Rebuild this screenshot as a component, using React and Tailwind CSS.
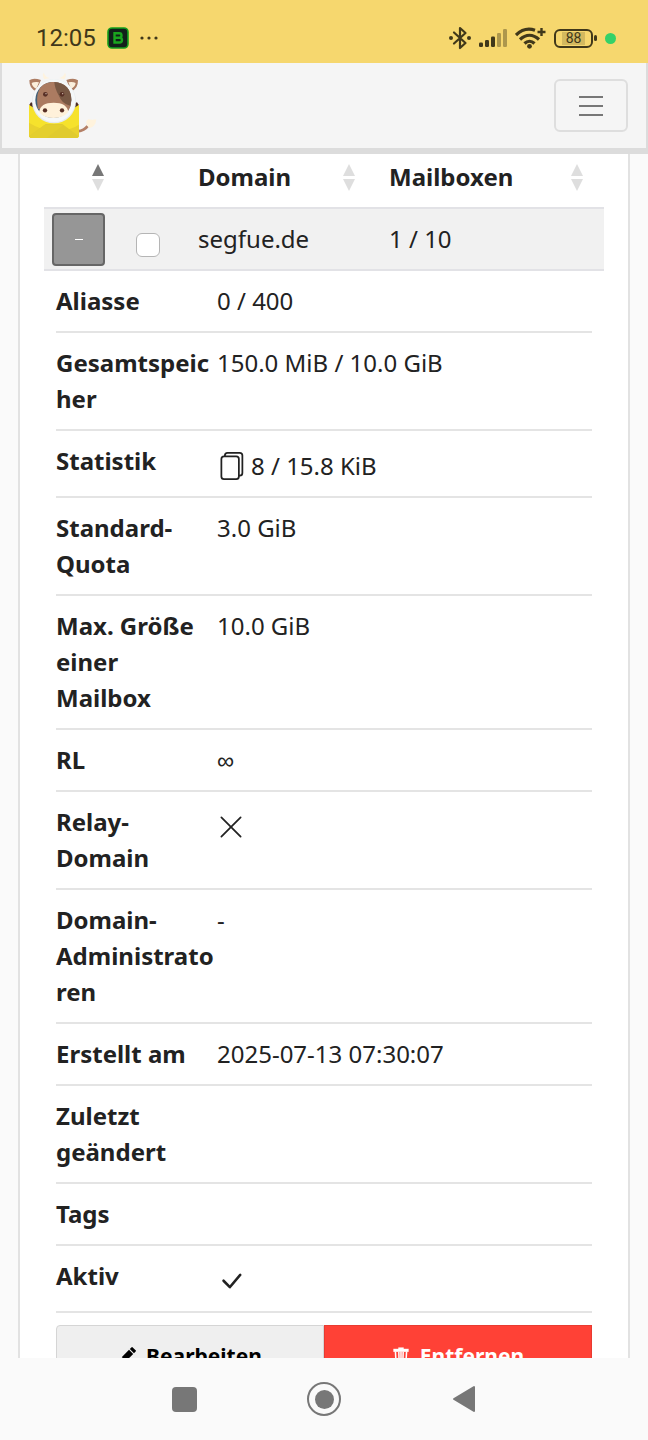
import { BsCheckLg, BsFiles, BsPencilFill, BsXLg } from 'react-icons/bs';

const details = [
  { label: 'Aliasse', value: '0 / 400' },
  { label: 'Gesamtspeicher', value: '150.0 MiB / 10.0 GiB' },
  { label: 'Statistik', value: '8 / 15.8 KiB', icon: BsFiles },
  { label: 'Standard-Quota', value: '3.0 GiB' },
  { label: 'Max. Größe einer Mailbox', value: '10.0 GiB' },
  { label: 'RL', value: '∞' },
  { label: 'Relay-Domain', icon: BsXLg },
  { label: 'Domain-Administratoren', value: '-' },
  { label: 'Erstellt am', value: '2025-07-13 07:30:07' },
  { label: 'Zuletzt geändert' },
  { label: 'Tags' },
  { label: 'Aktiv', icon: BsCheckLg },
];

function StatusBar() {
  return (
    <div className="flex h-[63px] shrink-0 items-center justify-between bg-[#f6d76e] pt-[13px] pr-8 pl-9 text-[#40381a]">
      <div className="flex items-center gap-[10px]">
        <span className="font-['Roboto',sans-serif] text-2xl leading-6">12:05</span>
        <svg className="size-6" viewBox="0 0 24 24">
          <rect x="2" y="2" width="20" height="20" rx="4" fill="#12201a" stroke="#14a01c" strokeWidth="1.6" />
          <path d="M8.500 7.200h4.800q2.200 0 2.200 2.200t-2.200 2.300H8.500zM8.500 11.700h5q2.500 0 2.500 2.400t-2.500 2.400h-5z" fill="none" stroke="#1aa51e" strokeWidth="2.400" />
        </svg>
        <svg className="h-1 w-[18px]" viewBox="0 0 18 4" fill="currentColor">
          <circle cx="2" cy="2" r="1.600" />
          <circle cx="9" cy="2" r="1.600" />
          <circle cx="16" cy="2" r="1.600" />
        </svg>
      </div>
      <div className="flex items-center gap-2">
        <svg className="h-6 w-[22px]" viewBox="0 0 22 24" fill="none" stroke="currentColor" strokeWidth="2.200" strokeLinejoin="round" strokeLinecap="round">
          <path d="M5 6.500 16.500 17 11 22V2l5.500 5L5 17.500" />
          <circle cx="2" cy="12" r="2" fill="currentColor" stroke="none" />
          <circle cx="20" cy="12" r="2" fill="currentColor" stroke="none" />
        </svg>
        <svg className="h-[18px] w-7" viewBox="0 0 28 18" fill="currentColor">
          <rect x="0" y="13.500" width="4" height="4.500" rx="1.200" />
          <rect x="6" y="11" width="4" height="7" rx="1.200" />
          <rect x="12" y="7.500" width="4" height="10.500" rx="1.200" />
          <rect x="18" y="4" width="4" height="14" rx="1.200" opacity=".4" />
          <rect x="24" y="0" width="4" height="18" rx="1.200" opacity=".4" />
        </svg>
        <svg className="h-[22px] w-[31px]" viewBox="0 0 31 22" fill="none" stroke="currentColor" strokeWidth="3.200">
          <path d="M1 8C7 2.300 14 1.200 20 3.300" />
          <path d="M5 12.500C11 7 18 7 24 12.500" />
          <path d="M9.500 16.500C12.500 13.600 16.500 13.600 19.500 16.500" />
          <circle cx="14.500" cy="19.300" r="2.400" fill="currentColor" stroke="none" />
          <path d="M22.500 5h8M26.500 1v8" strokeWidth="2.400" />
        </svg>
        <div className="flex items-center gap-px">
          <div className="flex h-[19px] w-[39px] items-center justify-center rounded-md border-2 border-[#40381a] p-px">
            <span className="bg-[#d3b95f] px-1 font-['Roboto',sans-serif] text-sm leading-[13px]">88</span>
          </div>
          <div className="h-[6px] w-[3px] rounded-xs bg-[#40381a]" />
        </div>
        <span className="size-[11px] rounded-full bg-[#35d168]" />
      </div>
    </div>
  );
}

function CowLogo() {
  return (
    <svg className="h-[68px] w-[70px]" viewBox="36 12 210 204">
      <path d="M188 190q20-2 30-16" fill="none" stroke="#b48067" strokeWidth="9" />
      <path d="M214 166q-2-8 6-12 12 2 24 0-2 22-20 26-9-4-10-14z" fill="#fff3dd" />
      <path d="M88 34q-8-12-2-20 6 14 18 16zM148 34q8-12 2-20-6 14-18 16z" fill="#fef3df" />
      <path d="M78 36q-24-8-35 1 0 26 20 32zM154 36q24-8 35 1 0 26-20 32z" fill="#ad7d63" />
      <path d="M72 43q-14-2-22 2 2 13 14 17zM160 43q14-2 22 2-2 13-14 17z" fill="#fbefdc" />
      <path d="M42 112l6-9 14 6v16zM192 112l-6-9-14 6v16z" fill="#4b2c24" />
      <path d="M42 110 62 124h110l20-14v92q0 8-8 8H50q-8 0-8-8z" fill="#f6e22c" />
      <path d="M42 164q40 26 86 24 40-2 64-18v32q0 8-8 8H50q-8 0-8-8z" fill="#e9d22d" />
      <path d="M43 205 92 168h50l49 37q-2 5-7 5H50q-5 0-7-5z" fill="#e0cb2f" />
      <path d="M43 205 88 171h58L95 210H50q-5 0-7-5z" fill="#e4cf2e" />
      <circle cx="117" cy="100" r="66" fill="#e6eaeb" />
      <circle cx="117" cy="98" r="64" fill="#f5f8f9" />
      <circle cx="115" cy="96" r="54" fill="#426077" />
      <path d="M69 123C59 68 78 42 115 42s54 24 54 54q0 18-9 32z" fill="#ab7b61" />
      <path d="M118 42q50 5 51 53-1 10-4 18-24-4-34-31-12-21-13-40z" fill="#785844" />
      <path d="M72 132q4-28 44-28t44 28q-15 18-45 18-28 0-43-18z" fill="#fff1da" />
      <g fill="#572f25">
        <circle cx="91" cy="79" r="7" />
        <circle cx="141" cy="79" r="7" />
        <circle cx="90" cy="127" r="6.500" />
        <circle cx="141" cy="127" r="6.500" />
      </g>
      <circle cx="93" cy="77" r="2" fill="#d8c2b5" />
      <circle cx="143" cy="77" r="2" fill="#d8c2b5" />
    </svg>
  );
}

function SortArrows({ ascending = false }) {
  return (
    <svg className="h-[27px] w-3" viewBox="0 0 12 27">
      <path d="M6 0l6 12H0z" fill={ascending ? '#777' : '#dedede'} />
      <path d="M6 27l6-12H0z" fill="#dedede" />
    </svg>
  );
}

function TrashIcon() {
  return (
    <svg className="size-[18px]" viewBox="0 0 18 20" fill="none" stroke="currentColor" strokeWidth="1.700">
      <path d="M6 1.500h6" strokeWidth="2" />
      <path d="M.5 3.700h17" strokeWidth="3.400" />
      <path d="M2.800 5l.8 14h10.800l.8-14M6.600 5.500l.3 11M9 5.500v11M11.400 5.500l-.3 11" />
    </svg>
  );
}

function DomainTable() {
  return (
    <table className="w-full table-fixed border-separate border-spacing-0 text-left">
      <thead>
        <tr className="*:border-b-2 *:border-[#e2e2e6] *:pt-[5px] *:pb-3">
          <th className="w-[82px] pr-[22px]" aria-label="Sortierung">
            <div className="flex h-9 items-center justify-end"><SortArrows ascending /></div>
          </th>
          <th className="w-[60px]" aria-label="Auswahl" />
          <th className="w-[191px] pr-[22px] pl-3">
            <div className="flex h-9 items-center justify-between">Domain<SortArrows /></div>
          </th>
          <th className="pr-[21px] pl-3">
            <div className="flex h-9 items-center justify-between">Mailboxen<SortArrows /></div>
          </th>
        </tr>
      </thead>
      <tbody>
        <tr className="h-[62px] bg-[#f1f1f1] *:border-b-2 *:border-[#e2e2e6]">
          <td className="pt-1 pl-2 align-top">
            <button type="button" aria-label="Details schließen" className="flex size-[53px] items-center justify-center rounded border-2 border-[#666] bg-[#969696]">
              <span className="h-px w-2 bg-white" />
            </button>
          </td>
          <td className="pt-6 pl-[10px] align-top">
            <input type="checkbox" aria-label="segfue.de" className="block size-6 appearance-none rounded-md border border-[#b5b5b5] bg-white" />
          </td>
          <td className="pl-3">segfue.de</td>
          <td className="pl-3">1 / 10</td>
        </tr>
        <tr>
          <td colSpan={4} className="px-3">
            <ul>
              {details.map(({ label, value, icon: Icon }) => (
                <li key={label} className="flex items-start border-b-2 border-[#e4e4e4] py-3">
                  <span className="w-[161px] shrink-0 font-bold wrap-break-word">{label}</span>
                  <span className={Icon ? 'flex items-center gap-[6px] pt-[5px]' : ''}>
                    {Icon && <Icon className="size-7" />}
                    {value}
                    {Icon && !value && <span className="h-9" />}
                  </span>
                </li>
              ))}
            </ul>
            <div className="flex pt-3 text-[21px] leading-8 font-bold">
              <button type="button" className="flex flex-1 items-center justify-center gap-[10px] rounded-l border border-[#d5d5d5] bg-[#efefef] py-[14px] text-black">
                <BsPencilFill className="size-[18px]" />
                Bearbeiten
              </button>
              <button type="button" className="flex flex-1 items-center justify-center gap-[10px] border border-[#e83b31] bg-[#ff4136] py-[14px] text-white">
                <TrashIcon />
                Entfernen
              </button>
            </div>
          </td>
        </tr>
      </tbody>
    </table>
  );
}

export default function App() {
  return (
    <div className="flex h-screen flex-col overflow-hidden bg-[#fafafa] font-['Noto_Sans',sans-serif] text-2xl leading-9 text-[#222]">
      <StatusBar />
      <header className="flex h-[91px] shrink-0 items-center justify-between border-x-2 border-b-[6px] border-[#dcdcdc] bg-[#f5f5f5] pr-[18px] pl-[25px]">
        <a href="#" aria-label="Startseite"><CowLogo /></a>
        <button type="button" aria-label="Menü" className="flex h-[53px] w-[74px] items-center justify-center rounded-md border-2 border-[#dedede]">
          <svg className="h-[22px] w-6" viewBox="0 0 24 22" stroke="#777" strokeWidth="2">
            <path d="M0 2h24M0 11h24M0 20h24" />
          </svg>
        </button>
      </header>

      <main className="min-h-0 flex-1 overflow-hidden">
        <div className="mx-[18px] border-x-2 border-[#e2e2e2] bg-white px-6">
          <DomainTable />
        </div>
      </main>

      <nav className="flex h-[82px] shrink-0 items-center justify-center bg-[#fafafa]">
        <button type="button" aria-label="Übersicht" className="flex w-35 justify-center">
          <span className="size-[25px] rounded bg-[#777]" />
        </button>
        <button type="button" aria-label="Home" className="flex w-35 justify-center">
          <span className="flex size-[34px] items-center justify-center rounded-full border-2 border-[#777]">
            <span className="size-[19px] rounded-full bg-[#777]" />
          </span>
        </button>
        <button type="button" aria-label="Zurück" className="flex w-35 justify-center">
          <svg className="h-7 w-6" viewBox="0 0 24 28">
            <path d="M22 2v24L2 14z" fill="#777" stroke="#777" strokeWidth="2" strokeLinejoin="round" />
          </svg>
        </button>
      </nav>
    </div>
  );
}
